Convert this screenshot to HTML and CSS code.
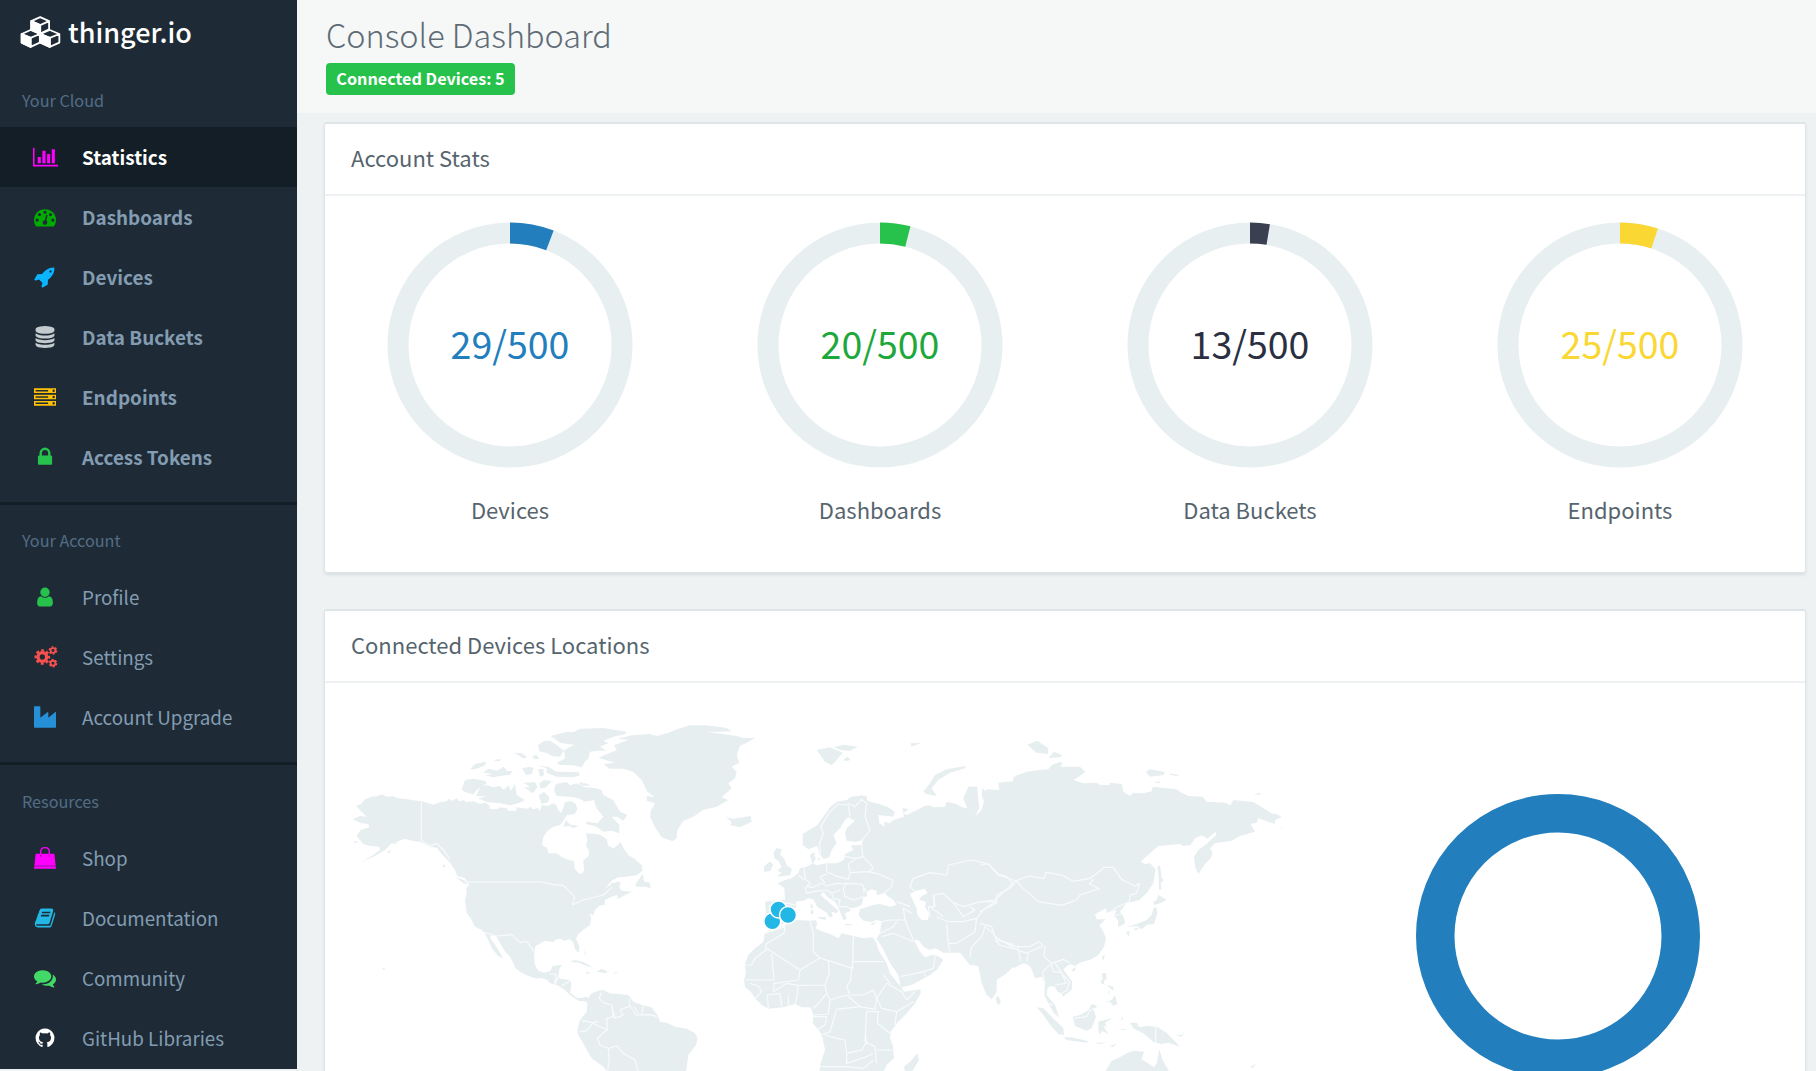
FILE: index.html
```html
<!DOCTYPE html>
<html lang="en">
<head>
<meta charset="utf-8">
<title>thinger.io - Console Dashboard</title>
<link rel="stylesheet" href="styles.css">
</head>
<body>
<div class="app">
  <aside class="sidebar">
    <div class="brand">
      <svg class="brand-logo" viewBox="60 42 124 102" fill="none" stroke="#fff" stroke-width="5.500" stroke-linejoin="round">
        <path d="M121 48l27 12v25l-27 13-27-13V60zM94 60l27 12 27-12M121 72v26"/><path fill="#fff" d="M94 60l27 12v26l-27-13z"/>
        <path d="M92 87l28 12v26l-28 13-27-13V99zM65 99l27 12 28-12M92 111v27"/><path fill="#fff" d="M65 99l27 12v27l-27-13z"/>
        <path d="M150 87l29 12v26l-29 13-28-13V99zM122 99l28 12 29-12M150 111v27"/><path fill="#fff" d="M122 99l28 12v27l-28-13z"/>
      </svg>
      <span class="brand-name">thinger.io</span>
    </div>

    <h2 class="nav-label">Your Cloud</h2>
    <nav class="nav strong">
      <a class="nav-item active"><svg class="icon wide magenta" viewBox="0 0 2048 1792"><path d="M640 896v512h-256v-512h256zm384-512v1024h-256v-1024h256zm1024 1152v128h-2048v-1536h128v1408h1920zm-640-896v768h-256v-768h256zm384-384v1152h-256v-1152h256z"/></svg><span>Statistics</span></a>
      <a class="nav-item"><svg class="icon darkgreen" viewBox="0 0 1792 1792"><path d="M384 1152q0-53-37.5-90.5t-90.5-37.5-90.5 37.5-37.5 90.5 37.5 90.5 90.5 37.5 90.5-37.5 37.5-90.5zm192-448q0-53-37.5-90.5t-90.5-37.5-90.5 37.5-37.5 90.5 37.5 90.5 90.5 37.5 90.5-37.5 37.5-90.5zm428 481l101-382q6-26-7.5-48.5t-38.5-29.5-48 6.5-30 39.5l-101 382q-60 5-107 43.5t-63 98.5q-20 77 20 146t117 89 146-20 89-117q16-60-6-117t-72-91zm660-33q0-53-37.5-90.5t-90.5-37.5-90.5 37.5-37.5 90.5 37.5 90.5 90.5 37.5 90.5-37.5 37.5-90.5zm-640-640q0-53-37.5-90.5t-90.5-37.5-90.5 37.5-37.5 90.5 37.5 90.5 90.5 37.5 90.5-37.5 37.5-90.5zm448 192q0-53-37.5-90.5t-90.5-37.5-90.5 37.5-37.5 90.5 37.5 90.5 90.5 37.5 90.5-37.5 37.5-90.5zm320 448q0 261-141 483-19 29-54 29h-1402q-35 0-54-29-141-221-141-483 0-182 71-348t191-286 286-191 348-71 348 71 286 191 191 286 71 348z"/></svg><span>Dashboards</span></a>
      <a class="nav-item"><svg class="icon sky" viewBox="0 0 1792 1792"><path d="M1440 448q0-40-28-68t-68-28-68 28-28 68 28 68 68 28 68-28 28-68zm224-288q0 249-75.500 430.500t-253.500 360.500q-81 80-195 176l-20 379q-2 16-16 26l-384 224q-7 4-16 4-12 0-23-9l-64-64q-13-14-8-32l85-276-281-281-276 85q-3 1-9 1-14 0-23-9l-64-64q-17-19-5-39l224-384q10-14 26-16l379-20q96-114 176-195 188-187 358-258t431-71q14 0 24 9.500t10 22.500z"/></svg><span>Devices</span></a>
      <a class="nav-item"><svg class="icon silver" viewBox="0 0 1792 1792"><path d="M896 768q237 0 443-43t325-127v170q0 69-103 128t-280 93.500-385 34.500-385-34.500-280-93.500-103-128v-170q119 84 325 127t443 43zm0 768q237 0 443-43t325-127v170q0 69-103 128t-280 93.500-385 34.500-385-34.500-280-93.500-103-128v-170q119 84 325 127t443 43zm0-384q237 0 443-43t325-127v170q0 69-103 128t-280 93.500-385 34.500-385-34.500-280-93.500-103-128v-170q119 84 325 127t443 43zm0-1152q208 0 385 34.500t280 93.500 103 128v128q0 69-103 128t-280 93.500-385 34.500-385-34.500-280-93.500-103-128v-128q0-69 103-128t280-93.500 385-34.500z"/></svg><span>Data Buckets</span></a>
      <a class="nav-item"><svg class="icon amber" viewBox="0 0 1792 1792"><path fill-rule="evenodd" d="M0 192h1792v384h-1792zM0 704h1792v384h-1792zM0 1216h1792v384h-1792zM128 320v128h1024v-128zM128 832v128h1024v-128zM128 1344v128h1024v-128zM1504 384a96 96 0 1 0 192 0 96 96 0 1 0-192 0zM1504 896a96 96 0 1 0 192 0 96 96 0 1 0-192 0zM1504 1408a96 96 0 1 0 192 0 96 96 0 1 0-192 0z"/></svg><span>Endpoints</span></a>
      <a class="nav-item"><svg class="icon green" viewBox="0 0 1792 1792"><path d="M640 768h512v-192q0-106-75-181t-181-75-181 75-75 181v192zm832 96v576q0 40-28 68t-68 28h-960q-40 0-68-28t-28-68v-576q0-40 28-68t68-28h32v-192q0-184 132-316t316-132 316 132 132 316v192h32q40 0 68 28t28 68z"/></svg><span>Access Tokens</span></a>
    </nav>

    <h2 class="nav-label divided">Your Account</h2>
    <nav class="nav">
      <a class="nav-item"><svg class="icon green" viewBox="0 0 1792 1792"><path d="M1536 1399q0 109-62.500 187t-150.500 78h-854q-88 0-150.500-78t-62.500-187q0-85 8.500-160.500t31.500-152 58.500-131 94-89 134.500-34.500q131 128 313 128t313-128q76 0 134.500 34.500t94 89 58.500 131 31.500 152 8.500 160.500zm-256-887q0 159-112.500 271.500t-271.500 112.500-271.500-112.500-112.500-271.500 112.500-271.500 271.500-112.500 271.500 112.500 112.500 271.500z"/></svg><span>Profile</span></a>
      <a class="nav-item"><svg class="icon wide red" viewBox="0 0 75 66" fill="none" stroke="currentColor"><g transform="translate(3 0)"><circle cx="25" cy="33" r="13" stroke-width="10"/><circle cx="25" cy="33" r="20" stroke-width="7" stroke-dasharray="8.700 7.010" stroke-dashoffset="4.350"/><circle cx="57" cy="13.500" r="7.200" stroke-width="5.500"/><circle cx="57" cy="13.500" r="11" stroke-width="4" stroke-dasharray="6.250 5.270"/><circle cx="57" cy="51.500" r="7.200" stroke-width="5.500"/><circle cx="57" cy="51.500" r="11" stroke-width="4" stroke-dasharray="6.250 5.270"/></g></svg><span>Settings</span></a>
      <a class="nav-item"><svg class="icon blue" viewBox="0 0 66 66"><path d="M1 1h16q2 0 2 2v32l22-17q2-1 2 1v16l21-17q2-1 2 1v44q0 2-2 2H2q-2 0-2-2V2q0-1 1-1z"/></svg><span>Account Upgrade</span></a>
    </nav>

    <h2 class="nav-label divided last">Resources</h2>
    <nav class="nav">
      <a class="nav-item"><svg class="icon magenta" viewBox="0 0 66 66"><path d="M5 20h56l4 36H1zM1 58h64l1 7H0z"/><path d="M20 27V15q0-13 13-13t13 13v12" fill="none" stroke="currentColor" stroke-width="4"/><path d="M18 24h4v5h-4zM44 24h4v5h-4z" fill="#a0a"/></svg><span>Shop</span></a>
      <a class="nav-item"><svg class="icon cyan" viewBox="0 0 1792 1792"><path d="M1703 478q40 57 18 129l-275 906q-19 64-76.500 107.500t-122.500 43.500h-923q-77 0-148.500-53.500t-99.500-131.500q-24-67-2-127 0-4 3-27t4-37q1-8-3-21.500t-3-19.500q2-11 8-21t16.500-23.500 16.500-23.500q23-38 45-91.500t30-91.500q3-10 .5-30t-.5-28q3-11 17-28t17-23q21-36 42-92t25-90q1-9-2.500-32t.5-28q4-13 22-30.500t22-22.500q19-26 42.500-84.500t27.500-96.500q1-8-3-25.500t-2-26.500q2-8 9-18t18-23 17-21q8-12 16.500-30.500t15-35 16-36 19.500-32 26.500-23.500 36-11.500 47.500 5.500l-1 3q38-9 51-9h761q74 0 114 56t18 130l-274 906q-36 119-71.500 153.500t-128.500 34.500h-869q-27 0-38 15-11 16-1 43 24 70 144 70h923q29 0 56-15.500t35-41.500l300-987q7-22 5-57 38 15 59 43zm-1064 2q-4 13 2 22.500t20 9.500h608q13 0 25.500-9.500t16.500-22.500l21-64q4-13-2-22.500t-20-9.500h-608q-13 0-25.500 9.500t-16.500 22.500zm-83 256q-4 13 2 22.500t20 9.500h608q13 0 25.500-9.500t16.500-22.500l21-64q4-13-2-22.500t-20-9.500h-608q-13 0-25.500 9.500t-16.500 22.500z"/></svg><span>Documentation</span></a>
      <a class="nav-item"><svg class="icon lime" viewBox="0 0 1792 1792"><path d="M1408 768q0 139-94 257t-256.500 186.500-353.500 68.500q-86 0-176-16-124 88-278 128-36 9-86 16h-3q-11 0-20.500-8t-11.500-21q-1-3-1-6.500t.5-6.500 2-6l2.500-5 3.500-5.500 4-5 4.500-5 4-4.500q5-6 23-25t26-29.500 22.500-29 25-38.500 20.500-44q-124-72-195-177t-71-224q0-139 94-257t256.500-186.500 353.500-68.500 353.500 68.500 256.500 186.500 94 257zm384 256q0 120-71 224.500t-195 176.500q10 24 20.500 44t25 38.500 22.500 29 26 29.500 23 25q1 1 4 4.500t4.500 5 4 5 3.500 5.500l2.500 5 2 6 .5 6.500-1 6.500q-3 14-13 22t-22 7q-50-7-86-16-154-40-278-128-90 16-176 16-271 0-472-132 58 4 88 4 161 0 309-45t264-129q125-92 192-212t67-254q0-77-23-152 129 71 204 178t75 230z"/></svg><span>Community</span></a>
      <a class="nav-item"><svg class="icon white" viewBox="0 0 1792 1792"><path d="M896 128q209 0 385.500 103t279.500 279.500 103 385.500q0 251-146.500 451.500t-378.500 277.500q-27 5-40-7t-13-30q0-3 .5-76.500t.5-134.500q0-97-52-142 57-6 102.500-18t94-39 81-66.500 53-105 20.500-150.500q0-119-79-206 37-91-8-204-28-9-81 11t-92 44l-38 24q-93-26-192-26t-192 26q-16-11-42.500-27t-83.500-38.500-85-13.500q-45 113-8 204-79 87-79 206 0 85 20.500 150t52.500 105 80.500 67 94 39 102.500 18q-39 36-49 103-21 10-45 15t-57 5-65.500-21.500-55.500-62.500q-19-32-48.500-52t-49.500-24l-20-3q-21 0-29 4.500t-5 11.500 9 14 13 12l7 5q22 10 43.500 38t31.500 51l10 23q13 38 44 61.500t67 30 69.500 7 55.500-3.500l23-4q0 38 .5 88.500t.5 54.500q0 18-13 30t-40 7q-232-77-378.500-277.500t-146.500-451.500q0-209 103-385.500t279.500-279.500 385.500-103z"/></svg><span>GitHub Libraries</span></a>
    </nav>
  </aside>

  <main class="main">
    <header class="page-head">
      <h1 class="page-title">Console Dashboard</h1>
      <span class="badge">Connected Devices: 5</span>
    </header>

    <section class="panel stats-panel">
      <h2 class="panel-title">Account Stats</h2>
      <div class="stats">
        <div class="stat">
          <div class="gauge"><svg viewBox="-123 -123 246 246"><circle class="track" r="112"/><path class="c-blue" d="M0-122.500A122.500 122.500 0 0 1 43.660-114.460L36.180-94.830A101.500 101.500 0 0 0 0-101.500z"/></svg><span class="value c-blue">29/500</span></div>
          <div class="caption">Devices</div>
        </div>
        <div class="stat">
          <div class="gauge"><svg viewBox="-123 -123 246 246"><circle class="track" r="112"/><path class="c-seg-green" d="M0-122.500A122.500 122.500 0 0 1 30.460-118.650L25.240-98.310A101.500 101.500 0 0 0 0-101.500z"/></svg><span class="value c-green">20/500</span></div>
          <div class="caption">Dashboards</div>
        </div>
        <div class="stat">
          <div class="gauge"><svg viewBox="-123 -123 246 246"><circle class="track" r="112"/><path class="c-seg-dark" d="M0-122.500A122.500 122.500 0 0 1 19.920-120.870L16.510-100.150A101.500 101.500 0 0 0 0-101.500z"/></svg><span class="value c-dark">13/500</span></div>
          <div class="caption">Data Buckets</div>
        </div>
        <div class="stat">
          <div class="gauge"><svg viewBox="-123 -123 246 246"><circle class="track" r="112"/><path class="c-yellow" d="M0-122.500A122.500 122.500 0 0 1 37.850-116.500L31.370-96.530A101.500 101.500 0 0 0 0-101.500z"/></svg><span class="value c-yellow">25/500</span></div>
          <div class="caption">Endpoints</div>
        </div>
      </div>
    </section>

    <section class="panel map-panel">
      <h2 class="panel-title">Connected Devices Locations</h2>
      <div class="locations">
        <svg class="world" viewBox="340 700 960 371">
          <!-- North America -->
          <g transform="translate(340 700) scale(.33333)">
            <path class="land" d="M48 318L62 313 75 298 95 290 112 289 125 283 140 290 158 289 172 294 200 297 220 301 244 304 262 308 280 314 300 307 320 304 325 297 336 302 350 295 358 304 372 300 378 306 400 304 420 311 436 308 450 318 448 326 470 328 480 322 500 325 505 332 530 332 528 322 560 326 572 320 578 328 594 324 598 334 606 316 625 318 640 310 650 316 654 330 664 338 676 306 692 303 708 312 712 328 704 342 680 346 672 360 660 375 640 380 620 395 610 412 606 435 622 444 625 460 650 460 664 470 680 478 702 484 704 505 715 520 726 521 732 512 730 480 745 470 748 455 738 437 742 420 738 400 770 402 782 405 800 418 805 438 822 445 842 426 852 448 866 466 885 478 905 496 908 512 890 526 860 530 835 532 815 542 795 565 815 552 835 544 842 548 838 562 845 572 876 575 862 582 832 597 834 586 820 588 795 600 794 614 778 617 765 630 760 646 748 642 754 655 750 675 732 688 715 703 708 715 718 740 717 760 705 748 700 728 690 718 670 722 664 716 650 718 638 726 615 722 587 738 584 750 582 770 585 795 595 812 612 818 632 812 638 798 665 794 658 808 655 830 660 836 690 840 694 850 691 878 710 893 725 894 740 890 745 895 742 905 716 902 690 885 672 868 650 855 630 850 622 840 605 834 590 836 560 826 540 815 525 803 520 790 510 770 496 755 485 738 470 712 450 706 452 716 470 740 490 775 474 767 455 745 445 720 432 697 425 690 405 680 395 660 380 638 375 600 380 580 378 565 388 555 375 535 352 528 345 510 330 488 310 468 290 443 270 440 240 425 215 422 195 416 174 424 165 432 155 430 135 450 110 465 62 488 95 468 120 450 118 440 90 438 70 432 50 408 62 390 88 382 85 372 65 370 38 358 60 348 80 350 62 332z
            M365 270L375 240 400 236 435 242 440 250 410 270 400 283 380 278zM408 288L422 260 440 255 460 262 480 258 492 270 506 256 512 272 525 252 530 285 555 300 540 308 510 316 480 310 440 306 415 295 440 290zM390 208L405 192 438 185 435 196 405 208zM430 218L445 206 470 212 492 200 500 212 518 214 510 224 480 228 460 232 435 226 460 222zM462 182L474 177 486 180 474 184zM522 158L545 160 562 172 550 175zM546 205L570 200 580 205 576 222 558 225zM576 168L590 165 598 176 584 178zM595 208L610 206 612 226 600 230zM594 136L612 122 630 122 650 135 672 152 660 170 635 168 622 160 598 154zM632 108L680 95 700 97 720 86 790 84 860 95 855 103 820 110 790 122 805 130 780 140 800 152 770 152 750 155 745 176 735 185 725 202 700 196 660 195 650 190 675 175 672 152 690 140 705 135 660 128zM585 196L625 200 650 215 715 216 720 226 700 232 650 230 620 218 620 204zM550 248L585 246 592 262 578 280 552 262 572 262zM598 250L612 240 635 243 618 262 602 266zM596 286L612 275 628 292 625 306 605 312zM642 270L648 252 680 246 690 256 710 250 735 262 765 264 785 270 790 285 820 300 840 335 862 345 850 362 832 350 815 350 838 375 838 400 815 392 790 395 770 380 738 372 740 365 772 370 790 350 770 325 762 300 735 305 715 295 690 290 650 288zM716 246L745 252 748 258 722 255zM670 380L678 360 690 374 716 378 700 384 688 378zM885 555L908 522 912 545 930 548 932 566 918 560 890 560zM812 548L835 552 838 570 822 578zM348 530L375 542 385 556 368 548zM306 494h10l-4 10zM140 456L155 450 148 460zM690 786L705 780 730 786 758 802 740 798 718 788zM770 815L785 806 805 815 795 820zM738 817h10v4h-10zM822 817h10v3h-10zM128 803h6v6h-6zM42 424h10v4h-10zM732 748l6 18 -4-2z"/>
            <path class="inlet" d="M740 330l12-8 8 10-10 8zM470 708q-8 0 20 52l-6 4-34-55z"/>
            <path class="border" d="M244 304V422L270 438 290 430 310 450 330 478M385 546H603L640 554 670 556 704 590 698 614 730 600 790 585 815 562M432 697L470 708 515 704 540 728 560 724 582 754M628 822h20v14l-6 14M655 830L645 855M664 858L690 842"/>
          </g>
          <!-- Greenland, Iceland, British Isles, South America -->
          <g transform="translate(560 710) scale(.33333)">
            <path class="land" d="M115 143L170 120 162 106 205 90 175 86 215 76 270 72 290 78 325 68 355 56 390 46 440 46 500 54 515 64 440 66 470 70 530 78 548 84 585 84 560 98 540 108 530 135 538 158 515 170 530 185 525 205 505 220 515 235 485 262 505 270 470 290 430 300 400 320 370 332 352 360 350 385 338 394 305 382 285 352 270 320 272 302 285 280 260 272 260 258 285 262 262 245 245 210 220 185 190 176 148 176 130 162 165 158zM498 322L520 326 550 322 572 318 575 335 540 352 510 346 515 336zM640 430L650 414 665 418 660 434 672 445 680 465 696 478 690 496 650 500 665 488 652 482 665 470 655 452 645 446zM612 470L628 455 640 462 632 482 612 486z
            M80 870L95 850 115 842 130 840 150 850 175 852 205 855 220 875 245 885 275 892 292 915 300 935 320 938 345 950 380 956 405 970 413 985 408 1005 385 1035 378 1086 H142L130 1070 95 1045 75 1010 55 975 52 960 60 930 80 905 82 885z"/>
            <path class="border" d="M125 845L118 865 130 878 155 885 160 920 140 925 142 960M155 885L165 925 190 915 180 900 210 888 208 868M210 888L228 915 270 914 290 920M222 890L235 912M250 888L246 912M65 932L100 938 115 935M60 965L80 962 98 940 142 960 130 968 112 985 120 1005 145 1015 148 1050 142 1086M145 1015L172 1008 190 1030 225 1050 235 1086"/>
          </g>
          <!-- Europe, Africa and western Asia -->
          <g transform="translate(730 720) scale(.33333)">
            <path class="land" d="M905 155L880 160 860 166 848 184 805 188 808 210 770 208 765 214 758 202 755 225 762 245 755 270 735 290 748 264 745 240 742 200 715 200 700 235 712 265 695 262 680 252 650 245 645 260 610 262 600 256 585 258 560 270 530 286 520 280 536 268 518 264 522 290 490 300 478 310 462 305 464 320 448 310 445 285 490 290 494 275 475 262 440 250 420 245 410 240 412 230 395 226 365 230 350 240 320 245 300 262 280 290 262 315 218 342 218 375 235 388 262 378 268 400 280 418 298 412 305 390 320 370 310 345 330 325 345 300 355 292 374 302 350 325 345 340 350 362 375 366 400 360 395 375 362 376 370 390 345 402 342 420 320 430 290 430 260 436 246 430 240 408 256 395 252 408 258 414 250 430 230 440 210 445 205 460 185 475 165 480 142 490 163 504 165 540 130 542 105 545 108 570 104 605 125 628 150 618 175 600 180 575 200 560 198 545 220 542 235 535 250 538 262 560 290 578 298 592 308 590 305 575 320 580 325 572 300 550 272 525 280 515 292 530 315 545 328 570 340 600 350 598 345 580 362 572 360 565 380 562 395 555 400 532 412 528 410 515 425 508 440 512 440 525 465 520 475 530 490 540 500 555 480 560 450 552 430 555 390 568 385 585 400 602 425 606 440 600 455 604 450 640 440 656 458 685 480 730 505 765 512 802 545 795 600 765 620 750 640 720 625 708 605 705 585 712 570 695 552 660 565 660 580 680 600 690 615 685 640 698 690 698 720 735 745 738 755 790 770 825 785 838 800 815 800 780 830 760 850 740 880 728 905 740z
            M104 640L125 628 160 618 200 600 245 602 258 600 262 612 256 625 275 634 300 642 325 655 335 640 370 648 400 655 428 652 440 668 445 690 470 730 480 760 500 785 515 803 522 815 572 808 572 820 555 850 530 880 505 905 482 935 480 955 488 975 492 1015 470 1035 460 1056H268L272 1030 285 990 278 955 270 935 248 910 250 885 245 870 240 862 215 862 195 852 160 862 115 866 95 855 75 835 62 815 45 800 42 780 48 760 45 732 55 705 75 685 100 665z
            M522 1040L545 1020 562 1000 567 1020 545 1056H525zM798 835L805 828 812 845 808 854 800 850zM260 90L300 82 338 98 320 120 305 136 285 125zM312 82L340 74 384 80 360 92 330 90zM342 118L352 110 362 120 346 124zM542 70L572 68 565 72 545 80zM580 215L600 190 615 165 650 148 708 138 705 145 660 158 625 180 605 205 620 228 590 222zM240 405L248 398 255 410 248 418zM262 415h10l-6 8zM262 590L290 592 286 600 270 596zM242 570h8v12h-8zM242 553h6v12h-6zM345 612h20v4h-20zM420 612L436 606 430 616z"/>
            <path class="water" d="M540 522L558 512 585 506 592 520 575 528 568 540 588 545 585 560 597 580 594 600 575 600 562 585 560 565z"/>
            <path class="border" d="M272 400L268 370 280 340 272 320 300 275 325 252 355 255 360 290M355 250L375 260 395 238 410 250 405 290 420 330 395 362M395 375L398 410 420 430 430 445 415 455 440 460 488 480 485 500 460 522M345 410L380 415 398 410M358 430L385 412M290 432L290 455 325 470 355 478 360 458 415 455M355 430L360 458M222 445L225 475 240 490 230 500 250 502 275 490 290 498 320 490 348 492 340 505 345 530 370 540 400 530M270 470L290 462M270 470L285 490M165 548L200 556M225 500L230 520 250 515 290 510 305 520 330 510M305 520L310 535 330 540 325 560 350 560 372 572M400 495L402 520M345 490L395 492 410 515M205 465L222 480M120 555L116 600
            M500 545L540 560M455 605L480 600 525 600 520 565 545 580M525 600L535 625 550 660M450 640L490 620 500 605M455 650L490 640 550 665M430 652L440 668M512 770L580 755 610 745 615 710M580 755L588 772M600 590L595 560 612 560 610 525 640 520 670 548 700 560 740 548 795 540 848 490 830 470 805 462 775 432 725 420 655 435 650 465 600 458 550 475 540 500 555 515M848 490L858 482 905 500M858 482L900 468M640 590L600 560M620 590L655 605 700 605 740 595 735 635 705 655 680 670 655 670 650 610M740 595L760 570 795 545M660 695L655 670M720 710L725 680 755 650 765 620 790 640 800 660 860 675 890 680 862 690 810 675 795 660M870 680L870 720 880 735M670 548L700 590 735 570 720 560M612 525L615 560
            M104 640L165 620 162 640 108 672 108 690 75 715 65 735H45M108 684L210 750 270 714 250 695 250 640 240 605M125 700L132 780H45M210 750L205 780 132 790 130 815M270 714L295 722 368 745 370 648M368 725H460M368 725L362 780 350 800 360 825M295 722L298 760 285 795 290 820 270 845 250 865M205 796L285 795M205 796L200 835 195 852M130 815L170 790 205 796M115 866L112 825 150 820 155 860M175 825L175 860M290 820L300 840 350 825 390 860 435 868 440 835 430 810 400 825 362 825M300 840L295 882 250 885M390 860L320 868 300 935 275 945M250 890H290L285 915 260 930M440 835L470 790 515 815 530 840 555 815M440 835L455 865 500 875 550 845M500 875L495 915M410 875H445L442 910 480 940M410 875L405 965 435 980 440 1030M405 940L410 965 395 990 350 1000 345 960 320 955 285 945M350 1000V1030L410 1010 430 1000M270 1040L345 1040 400 1045 430 1020M440 990L485 990M60 790L85 798 95 815 75 835M480 790L460 765"/>
          </g>
          <!-- Eastern Asia and Oceania -->
          <g transform="translate(980 720) scale(.33333)">
            <path class="land" d="M100 500L100 172 140 155 180 150 205 148 215 135 240 125 248 130 240 140 300 140 316 155 300 168 280 180 310 190 350 188 360 195 388 195 390 188 425 192 430 215 450 228 460 218 490 220 515 214 518 200 590 208 605 218 625 228 668 230 680 245 735 248 752 256 760 240 820 246 850 264 874 280 895 284 905 292 885 300 885 312 865 305 835 295 830 308 812 312 825 335 780 348 755 362 730 366 705 370 690 385 698 400 692 415 675 432 655 462 645 440 642 410 655 390 680 372 708 345 708 336 695 345 682 356 665 346 645 355 632 375 610 378 600 372 535 378 515 395 482 425 495 432 510 430 527 448 520 490 500 520 478 540 460 545 440 548 420 575 430 588 436 610 415 622 414 600 402 588 410 570 380 578 378 565 345 583 350 598 378 598 358 615 370 635 378 655 372 680 355 705 335 718 300 728 285 738 270 732 250 748 262 765 277 785 275 810 248 830 245 820 232 815 225 800 210 798 202 806 200 825 225 855 238 892 222 880 205 850 193 825 195 790 185 770 165 775 155 748 140 725 100 745z
            M142 74L172 62 205 85 204 102 170 98zM205 115L222 95 247 106 240 112zM497 156L510 148 555 156 550 165 510 170zM568 160L598 165 590 168 570 164zM522 188L535 184 544 190zM822 225L835 218 847 222zM895 322L915 328 905 326zM532 440L540 436 545 475 552 480 542 490 545 508 537 510 536 470zM520 545L530 540 535 524 560 540 540 550 522 555zM520 565L530 562 532 580 522 612 500 615 485 628 470 618 440 622 470 612 500 600 515 585zM438 636L450 632 446 650zM460 626L478 624 468 632zM366 712L375 700 370 724zM274 748L290 742 280 756zM366 760L378 758 380 775 368 788zM362 782L370 780 374 795 364 790zM380 795L400 800 400 812 390 805zM385 815L390 812 384 826zM372 850L395 840 405 825 412 852 400 858 390 845zM170 862L190 865 215 890 250 925 252 945 235 942 215 920 190 885zM250 952L275 952 325 964 320 968 260 960zM278 890L300 885 325 870 335 852 352 858 340 870 348 890 335 925 320 932 285 918zM355 905L375 900 398 894 375 908 380 920 370 918 385 942 365 932 362 944 355 935zM425 890L430 896 422 902zM412 926L445 928 430 930zM340 968H382L360 972zM390 978L412 970 398 982zM448 908L470 908 478 922 500 918 530 920 560 938 600 980 565 968 545 972 520 965 490 940 460 925 455 915zM585 945L605 945 615 933 605 950zM634 946l8 8zM810 1040l18-8-10 12zM49 835L54 828 62 845 56 854z
            M375 1056L395 1022 415 1014 440 1000 462 992 492 995 485 1018 522 1042 530 1030 538 988 548 1020 568 1056z"/>
            <path class="border" d="M0 435L25 432 55 465 108 483 145 468 192 475 198 457 245 465 280 484 330 475 365 450 370 442 400 442 425 478 465 498 478 490 470 520 450 525 448 545 410 562 390 575M108 483L130 505 175 545 245 556 290 540 300 525 358 506 328 492 340 478M108 483L90 505 50 525V548L0 575M0 545H50M0 610L35 620 45 650 112 690M52 655L85 672 112 680 150 680 175 665 195 682 192 710 215 730 250 718 268 728M112 680L118 700 122 725M118 692L140 700 160 690 185 680M145 700L140 725M215 730L188 755 195 790M215 735L220 755 245 758 258 790 225 795M225 730L250 765 268 785 262 810 245 820M205 850L220 855M282 895L320 890 330 870 345 865M527 920V970M402 588L428 582"/>
          </g>
          <g class="pins"><circle cx="772.300" cy="921.300" r="8.500"/><circle cx="778.500" cy="909.500" r="8.500"/><circle cx="788" cy="915" r="8.500"/></g>
        </svg>
        <svg class="donut" viewBox="-142 -142 284 284"><circle r="122.750"/></svg>
      </div>
    </section>
  </main>
</div>
</body>
</html>
```
FILE: styles.css
```css
* { box-sizing: border-box; }

body {
  margin: 0;
  height: 1071px;
  overflow: hidden;
  background: #eef2f3;
  color: #56646e;
  font-family: "Noto Sans CJK SC", "Noto Sans", sans-serif;
}

h1, h2 { margin: 0; font-weight: 400; }

.app { display: flex; height: 1071px; overflow: hidden; }

/* Sidebar */
.sidebar {
  flex: 0 0 297px;
  height: 1069px;
  overflow: hidden;
  background: #1e2b36;
  color: #839cb2;
}

.brand {
  display: flex;
  align-items: center;
  gap: 7px;
  height: 74px;
  padding: 0 0 11px 20px;
}
.brand-logo { width: 41px; height: 34px; }
.brand-name {
  color: #fff;
  font-size: 27px;
  font-weight: 500;
  line-height: 40px;
}

.nav-label {
  height: 53px;
  padding: 10px 0 0 22px;
  color: #536d85;
  font-size: 16.200px;
  line-height: 32px;
}
.nav-label.divided {
  height: 65px;
  margin-top: 15px;
  padding-top: 19px;
  border-top: 3px solid #141e26;
}
.nav-label.last { height: 66px; padding-top: 20px; }

.nav-item {
  display: grid;
  grid-template-columns: 26px 1fr;
  column-gap: 24px;
  align-items: center;
  height: 60px;
  padding-left: 32px;
  font-size: 18.800px;
  line-height: 28px;
}
.strong .nav-item { font-size: 18.900px; font-weight: 700; }
.nav-item.active { background: #131e26; color: #fff; }

.icon {
  justify-self: center;
  width: 22px;
  height: 22px;
  fill: currentColor;
}
.icon.wide { width: 25px; }
.icon.red { fill: none; }
.magenta { color: #f0f; }
.darkgreen { color: #0a0; }
.sky { color: #0ab4ff; }
.silver { color: #c3cbcf; }
.amber { color: #fec107; }
.green { color: #27c24c; }
.red { color: #f8504f; }
.blue { color: #2690d6; }
.cyan { color: #23b7e5; }
.lime { color: #43d967; }
.white { color: #fff; }

/* Main column */
.main { flex: 1; min-width: 0; padding-right: 10px; }

.page-head {
  height: 113px;
  margin-right: -10px;
  padding: 11px 0 0 29px;
  background: #f6f8f8;
}
.page-title {
  color: #5f6c76;
  font-size: 32.400px;
  font-weight: 200;
  line-height: 46px;
}
.badge {
  display: block;
  width: 189px;
  height: 32px;
  margin-top: 6px;
  border-radius: 4px;
  background: #27c24c;
  color: #fff;
  font-size: 16.200px;
  font-weight: 700;
  line-height: 30px;
  text-align: center;
}

.panel {
  margin-left: 27px;
  border: 1px solid #dee5e7;
  border-top-width: 2px;
  border-radius: 3px;
  background: #fff;
  box-shadow: 0 2px 3px #d8dfe2;
}
.panel-title {
  height: 72px;
  padding-left: 26px;
  border-bottom: 2px solid #edf1f2;
  font-size: 22px;
  line-height: 66px;
}

.stats-panel { height: 451px; margin-top: 9px; }
.stats { display: grid; grid-template-columns: repeat(4, 1fr); }
.stat { padding-top: 26px; text-align: center; }
.gauge { display: grid; place-items: center; height: 246px; }
.gauge > * { grid-area: 1 / 1; }
.gauge svg { width: 246px; height: 246px; fill: currentColor; }
.track { fill: none; stroke: #e8eff0; stroke-width: 21; }
.value { padding-bottom: 4px; font-size: 37.500px; line-height: 50px; }
.caption { padding-top: 25px; font-size: 22px; line-height: 32px; }

.c-blue { color: #227ebc; fill: #227ebc; }
.c-green { color: #1ea83b; }
.c-seg-green { fill: #27c24c; }
.c-dark { color: #2b2f42; }
.c-seg-dark { fill: #3a3f51; }
.c-yellow { color: #fad733; fill: #fad733; }

.map-panel { height: 480px; margin-top: 36px; }
.locations { display: flex; padding: 17px 0 0 15px; }
.world { flex: none; width: 960px; height: 371px; }
.land { fill: #e7eef0; }
.water, .inlet { fill: #fff; }
.border { fill: none; stroke: #f8fbfb; stroke-width: 3.500; stroke-linejoin: round; }
.pins circle { fill: #23b7e5; stroke: #fff; stroke-width: 1.500; }
.donut { flex: none; width: 284px; height: 284px; margin: 94px 0 0 116px; }
.donut circle { fill: none; stroke: #227ebc; stroke-width: 38.500; }
```
